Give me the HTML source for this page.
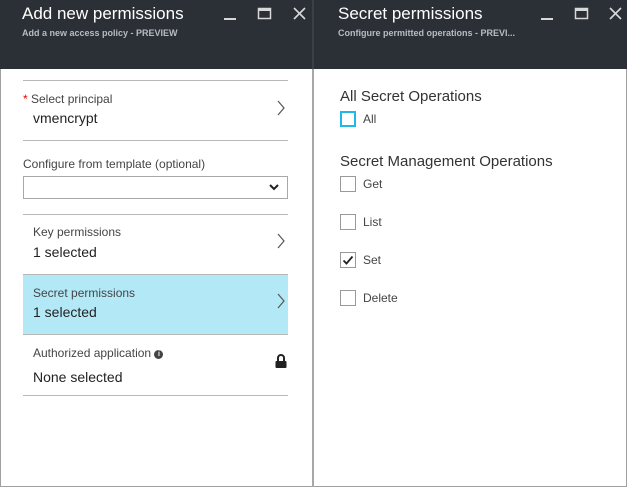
<!DOCTYPE html>
<html><head><meta charset="utf-8"><style>
*{margin:0;padding:0;box-sizing:border-box}
body{width:627px;height:487px;overflow:hidden;background:#fff;font-family:"Segoe UI","Liberation Sans",sans-serif;position:relative;color:#333}
.a{position:absolute}
.hdr{background:#2b3036;height:69px;top:0}
.t{color:#fff;font-size:17px;white-space:nowrap}
.st{color:#b8bcc0;font-size:9px;font-weight:bold;white-space:nowrap}
.ln{height:1px;background:#b8b8b8}
.lbl{font-size:12px;color:#444;white-space:nowrap}
.val{font-size:14px;color:#222;white-space:nowrap}
.cb{width:16px;height:16px;border:1px solid #999;background:#fff}
.cbl{font-size:12px;color:#444}
.h2{font-size:15px;color:#333;white-space:nowrap}
</style></head><body>
<div class="a" style="left:0;top:0;width:1px;height:487px;background:#a0a0a0"></div>
<div class="a" style="left:626px;top:0;width:1px;height:487px;background:#a0a0a0"></div>
<div class="a" style="left:0;top:486px;width:627px;height:1px;background:#a0a0a0"></div>
<div class="a hdr" style="left:0;width:627px"></div>
<div class="a" style="left:312px;top:0;width:2px;height:487px;background:#a8a8a8"></div>
<div class="a" style="left:312px;top:0;width:2px;height:69px;background:#3a4046"></div>

<div class="a t" style="left:22px;top:4px">Add new permissions</div>
<div class="a st" style="left:22px;top:28px">Add a new access policy - PREVIEW</div>
<svg class="a" style="left:220px;top:6px" width="90" height="16">
<rect x="4" y="12" width="12" height="2" fill="#d8d8d8"/>
<rect x="38.5" y="2.5" width="12" height="10" fill="none" stroke="#d8d8d8" stroke-width="1.5"/><rect x="38" y="2" width="13" height="3" fill="#d8d8d8"/>
<path d="M74 2L85 13M85 2L74 13" stroke="#d8d8d8" stroke-width="1.6"/>
</svg>

<div class="a t" style="left:338px;top:4px">Secret permissions</div>
<div class="a st" style="left:338px;top:28px">Configure permitted operations - PREVI...</div>
<svg class="a" style="left:537px;top:6px" width="90" height="16">
<rect x="4" y="12" width="12" height="2" fill="#d8d8d8"/>
<rect x="38.5" y="2.5" width="12" height="10" fill="none" stroke="#d8d8d8" stroke-width="1.5"/><rect x="38" y="2" width="13" height="3" fill="#d8d8d8"/>
<path d="M73 2L84 13M84 2L73 13" stroke="#d8d8d8" stroke-width="1.6"/>
</svg>

<div class="a ln" style="left:23px;top:80px;width:265px"></div>
<div class="a lbl" style="left:23px;top:92px"><span style="color:#e00">*</span> Select principal</div>
<div class="a val" style="left:33px;top:110px">vmencrypt</div>
<svg class="a" style="left:276px;top:100px" width="10" height="16"><path d="M2 1L8 8L2 15" fill="none" stroke="#555" stroke-width="1.2"/></svg>
<div class="a ln" style="left:23px;top:140px;width:265px"></div>
<div class="a lbl" style="left:23px;top:157px">Configure from template (optional)</div>
<div class="a" style="left:23px;top:176px;width:265px;height:23px;border:1px solid #a8a8a8"></div>
<svg class="a" style="left:268px;top:183px" width="12" height="9"><path d="M2 2L6 6L10 2" fill="none" stroke="#222" stroke-width="2"/></svg>
<div class="a ln" style="left:23px;top:214px;width:265px"></div>
<div class="a lbl" style="left:33px;top:225px">Key permissions</div>
<div class="a val" style="left:33px;top:244px">1 selected</div>
<svg class="a" style="left:276px;top:233px" width="10" height="16"><path d="M2 1L8 8L2 15" fill="none" stroke="#555" stroke-width="1.2"/></svg>
<div class="a" style="left:23px;top:274px;width:265px;height:60px;background:#b3e9f7;border-top:1px solid #b8b8b8"></div>
<div class="a lbl" style="left:33px;top:286px">Secret permissions</div>
<div class="a val" style="left:33px;top:304px">1 selected</div>
<svg class="a" style="left:276px;top:293px" width="10" height="16"><path d="M2 1L8 8L2 15" fill="none" stroke="#555" stroke-width="1.2"/></svg>
<div class="a ln" style="left:23px;top:334px;width:265px"></div>
<div class="a lbl" style="left:33px;top:346px">Authorized application <span style="display:inline-block;width:9px;height:9px;border-radius:50%;background:#444;color:#fff;font-size:7px;line-height:9px;text-align:center;font-weight:bold;vertical-align:1px">i</span></div>
<div class="a val" style="left:33px;top:369px">None selected</div>
<svg class="a" style="left:274px;top:353px" width="14" height="16"><path d="M4 8V5a3 3 0 0 1 6 0v3" fill="none" stroke="#222" stroke-width="2"/><rect x="1.5" y="8" width="11" height="7" rx="1" fill="#222"/></svg>
<div class="a ln" style="left:23px;top:395px;width:265px"></div>

<div class="a h2" style="left:340px;top:88px">All Secret Operations</div>
<div class="a cb" style="left:340px;top:111px;border:2px solid #1fb8e8"></div>
<div class="a cbl" style="left:363px;top:112px">All</div>
<div class="a h2" style="left:340px;top:153px">Secret Management Operations</div>
<div class="a cb" style="left:340px;top:176px"></div><div class="a cbl" style="left:363px;top:177px">Get</div>
<div class="a cb" style="left:340px;top:214px"></div><div class="a cbl" style="left:363px;top:215px">List</div>
<div class="a cb" style="left:340px;top:252px"></div><div class="a cbl" style="left:363px;top:253px">Set</div>
<svg class="a" style="left:340px;top:252px" width="16" height="16"><path d="M3.5 8.5L6.5 11.5L12.5 4.5" fill="none" stroke="#222" stroke-width="1.8"/></svg>
<div class="a cb" style="left:340px;top:290px"></div><div class="a cbl" style="left:363px;top:291px">Delete</div>
</body></html>
